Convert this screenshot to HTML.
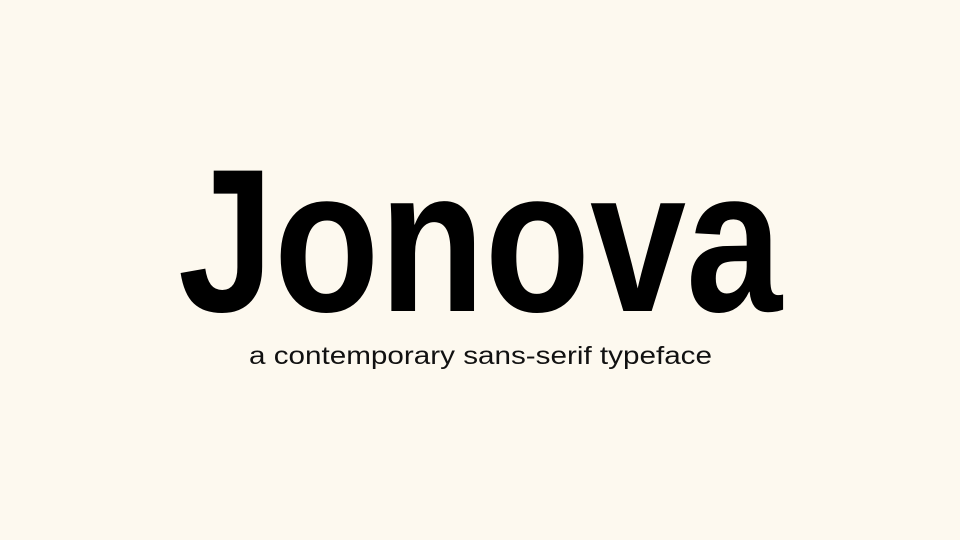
<!DOCTYPE html>
<html><head><style>
html,body{margin:0;padding:0;width:960px;height:540px;background:#fdf9ef;overflow:hidden}
</style></head><body>
<svg width="960" height="540" xmlns="http://www.w3.org/2000/svg">
<rect width="960" height="540" fill="#fdf9ef"/>
<text x="178" y="311" font-family="Liberation Sans, sans-serif" font-weight="bold" font-size="204" fill="#000" textLength="604" lengthAdjust="spacingAndGlyphs">Jonova</text>
<text x="249" y="364" font-family="Liberation Sans, sans-serif" font-size="25" fill="#111" textLength="463" lengthAdjust="spacingAndGlyphs">a contemporary sans-serif typeface</text>
</svg>
</body></html>
